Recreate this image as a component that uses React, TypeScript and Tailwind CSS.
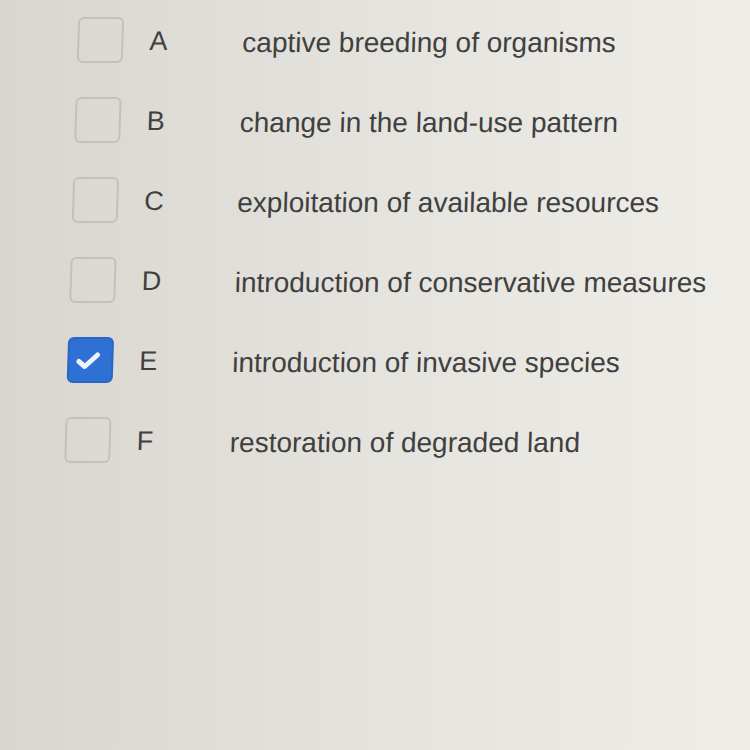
const options = [
  { letter: 'A', text: 'captive breeding of organisms', checked: false },
  { letter: 'B', text: 'change in the land-use pattern', checked: false },
  { letter: 'C', text: 'exploitation of available resources', checked: false },
  { letter: 'D', text: 'introduction of conservative measures', checked: false },
  { letter: 'E', text: 'introduction of invasive species', checked: true },
  { letter: 'F', text: 'restoration of degraded land', checked: false },
];

function Box({ checked }: { readonly checked: boolean }) {
  if (checked) {
    return (
      <div className="w-[46px] h-[46px] shrink-0 rounded-[6px] bg-[#2f70d4] border-2 border-[#2a66c4] flex items-center justify-center">
        <svg width="26" height="20" viewBox="0 0 26 20" fill="none" className="-ml-[4px] mt-[2px]">
          <path d="M3.5 10.5 L9.5 15.5 L22 4" stroke="#eef2fa" strokeWidth="5" strokeLinecap="round" strokeLinejoin="round" />
        </svg>
      </div>
    );
  }
  return <div className="w-[46px] h-[46px] shrink-0 rounded-[6px] border-2 border-[#c4c1bb]" />;
}

export default function App() {
  return (
    <div
      className="w-[750px] h-[750px] overflow-hidden bg-linear-to-r from-[#d9d6d0] via-[#e5e3dd] to-[#eeede8] text-[#404040] text-[28px]"
      style={{ fontFamily: '"Liberation Sans", Arial, sans-serif' }}
    >
      <div className="-skew-x-[1.8deg] origin-[0_245px] flex flex-col">
        {options.map((o) => (
          <div key={o.letter} className="h-[80px] flex items-center pl-[71px]">
            <Box checked={o.checked} />
            <div className="w-[119px] pl-[26px] pt-[2px] shrink-0 text-[27px]">{o.letter}</div>
            <div className="whitespace-nowrap pt-[6px]">{o.text}</div>
          </div>
        ))}
      </div>
    </div>
  );
}
